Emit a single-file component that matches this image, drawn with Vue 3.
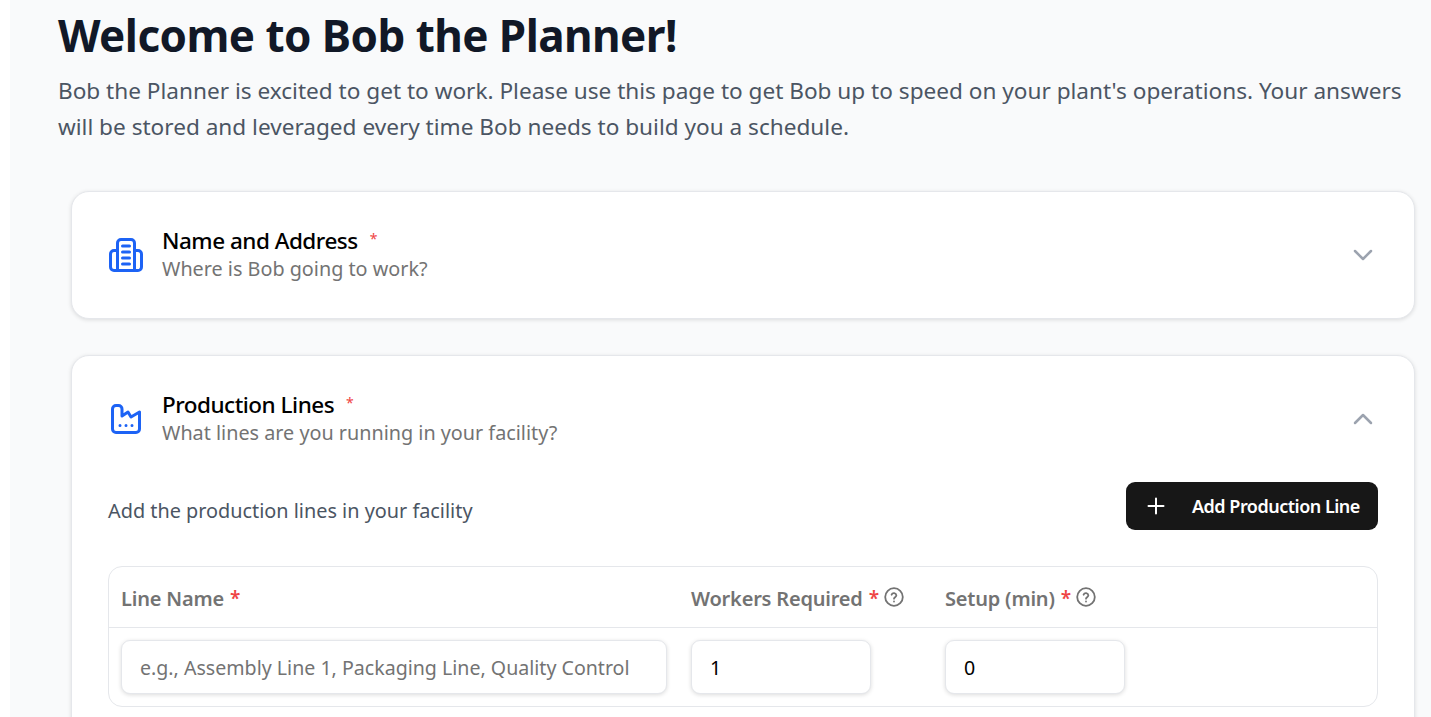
<script setup>
const columns = [
  { label: 'Line Name', help: false },
  { label: 'Workers Required', help: true },
  { label: 'Setup (min)', help: true },
]
</script>

<template>
  <div class="page">
    <main class="main">
      <h1 class="title">Welcome to Bob the Planner!</h1>
      <p class="intro">Bob the Planner is excited to get to work. Please use this page to get Bob up to speed on your plant's operations. Your answers will be stored and leveraged every time Bob needs to build you a schedule.</p>

      <div class="stack">
        <section class="card">
          <header class="card-head">
            <svg class="icon" viewBox="0 0 36 36" fill="none" stroke="#1d63f5" stroke-width="3" stroke-linecap="round" stroke-linejoin="round">
              <path d="M9.500 33V6a3.500 3.500 0 0 1 3.500-3.500h10A3.500 3.500 0 0 1 26.500 6v27" />
              <path d="M9.500 13.500H6a3.500 3.500 0 0 0-3.500 3.500V30A3.500 3.500 0 0 0 6 33.500h24a3.500 3.500 0 0 0 3.500-3.500V17a3.500 3.500 0 0 0-3.500-3.500h-3.500" />
              <path d="M14.500 9h7M14.500 15h7M14.500 21h7M14.500 27h7" />
            </svg>
            <div class="head-text">
              <div class="head-title"><span>Name and Address</span><span class="mark">*</span></div>
              <div class="head-sub">Where is Bob going to work?</div>
            </div>
            <svg class="chev" viewBox="0 0 20 12" fill="none" stroke="#9ca3af" stroke-width="2.500" stroke-linecap="round" stroke-linejoin="round"><path d="M2 2l8 8 8-8" /></svg>
          </header>
        </section>

        <section class="card">
          <header class="card-head">
            <svg class="icon" viewBox="0 0 36 36" fill="none" stroke="#1d63f5" stroke-width="3" stroke-linecap="round" stroke-linejoin="round">
              <path d="M4.500 28V8A3.500 3.500 0 0 1 8 4.500h2.500A3.500 3.500 0 0 1 14 8v7l6-4 3 5 8.500-5v17a3.500 3.500 0 0 1-3.500 3.500H8A3.500 3.500 0 0 1 4.500 28z" />
              <path d="M12 24.500h.01M18 24.500h.01M24 24.500h.01" />
            </svg>
            <div class="head-text">
              <div class="head-title"><span>Production Lines</span><span class="mark">*</span></div>
              <div class="head-sub">What lines are you running in your facility?</div>
            </div>
            <svg class="chev" viewBox="0 0 20 12" fill="none" stroke="#9ca3af" stroke-width="2.500" stroke-linecap="round" stroke-linejoin="round"><path d="M2 10l8-8 8 8" /></svg>
          </header>

          <div class="card-body">
            <div class="toolbar">
              <span class="hint">Add the production lines in your facility</span>
              <button class="add" type="button">
                <svg class="plus" viewBox="0 0 18 18" fill="none" stroke="#fff" stroke-width="2" stroke-linecap="round"><path d="M9 1.500v15M1.500 9h15" /></svg>
                <span class="add-label">Add Production Line</span>
              </button>
            </div>

            <div class="table">
              <div class="row row-head">
                <div v-for="col in columns" :key="col.label" class="th">
                  <span class="th-label">{{ col.label }}</span>
                  <span class="req">*</span>
                  <svg v-if="col.help" class="help" viewBox="0 0 20 20" fill="none" stroke="#737373" stroke-width="1.800" stroke-linecap="round" stroke-linejoin="round">
                    <circle cx="10" cy="10" r="8.800" />
                    <path d="M7.600 7.700a2.500 2.500 0 0 1 4.800.6c0 1.700-2.400 2-2.400 3.400" />
                    <path d="M10 14.500h.01" />
                  </svg>
                </div>
              </div>
              <div class="row row-body">
                <input class="field" type="text" placeholder="e.g., Assembly Line 1, Packaging Line, Quality Control" />
                <input class="field" type="text" value="1" />
                <input class="field" type="text" value="0" />
              </div>
            </div>
          </div>
        </section>
      </div>
    </main>
  </div>
</template>

<style>
html, body { margin: 0; background: #fff; overflow: hidden; }
</style>

<style scoped>
.page {
  height: 717px;
  overflow: hidden;
  padding-left: 10px;
  background: #fff;
  font-family: "Noto Sans", "Open Sans", sans-serif;
}
.main {
  height: 717px;
  box-sizing: border-box;
  padding: 0 16px 0 48px;
  background: #f9fafb;
}
.title {
  margin: 0;
  padding-top: 9px;
  font-size: 44px;
  line-height: 52px;
  letter-spacing: -0.55px;
  font-weight: 700;
  color: #111827;
}
.intro {
  margin: 12px 0 0;
  font-size: 22.600px;
  line-height: 36px;
  color: #4b5563;
}
.stack {
  display: flex;
  flex-direction: column;
  gap: 36px;
  margin: 46px 0 0 13px;
}
.card {
  box-sizing: border-box;
  background: #fff;
  border: 1px solid #e5e7eb;
  border-radius: 18px;
  box-shadow: 0 1px 4px rgba(0, 0, 0, 0.12);
  padding: 36px;
}
.card-head {
  display: flex;
  align-items: center;
  height: 54px;
}
.icon { width: 36px; height: 36px; flex: none; margin-right: 18px; }
.head-text { flex: 1; margin-top: -3px; }
.head-title { font-size: 22.500px; line-height: 27px; font-weight: 500; letter-spacing: -0.5px; color: #000; }
.mark { margin-left: 12px; font-size: 14px; font-weight: 400; vertical-align: 5px; color: #ef4444; }
.head-sub { margin-top: 1px; font-size: 19.800px; line-height: 27px; color: #737373; }
.chev { width: 20px; height: 12px; flex: none; margin-right: 5px; }
.card-body { margin-top: 36px; }
.toolbar { display: flex; align-items: center; justify-content: space-between; height: 48px; }
.hint { font-size: 19.850px; color: #4b5563; margin-top: 8px; }
.add {
  display: flex;
  align-items: center;
  height: 48px;
  width: 252px;
  box-sizing: border-box;
  padding: 0 18px 0 21px;
  gap: 27px;
  border: 0;
  border-radius: 9px;
  background: #171717;
  color: #fff;
  font: 600 18px "Noto Sans", "Open Sans", sans-serif;
}
.add-label { white-space: nowrap; letter-spacing: -0.5px; }
.plus { width: 18px; height: 18px; flex: none; }
.table {
  margin-top: 36px;
  border: 1px solid #e5e7eb;
  border-radius: 14px;
  background: #fff;
}
.row {
  display: grid;
  column-gap: 24px;
  padding: 0 12px;
}
.row-head {
  grid-template-columns: 546px 230px 180px;
  height: 60px;
  align-items: center;
  border-bottom: 1px solid #e5e7eb;
}
.th { display: flex; align-items: center; gap: 6px; font-size: 20px; font-weight: 600; letter-spacing: -0.2px; color: #737373; }
.th-label { padding-top: 2px; }
.req { color: #ef4444; font-size: 19px; padding-top: 2px; }
.help { width: 20px; height: 20px; margin-left: -1px; }
.row-body { padding-top: 12px; padding-bottom: 12px; grid-template-columns: 546px 180px 180px; }
.row-body .field:nth-child(3) { margin-left: 50px; }
.field {
  box-sizing: border-box;
  width: 100%;
  height: 54px;
  padding: 1px 18px 0;
  border: 1px solid #e5e7eb;
  border-radius: 9px;
  background: #fff;
  box-shadow: 0 1px 4px rgba(0, 0, 0, 0.14);
  outline: none;
  font: 400 19.600px "Noto Sans", "Open Sans", sans-serif;
  color: #000;
}
.field::placeholder { color: #737373; opacity: 1; }
</style>
